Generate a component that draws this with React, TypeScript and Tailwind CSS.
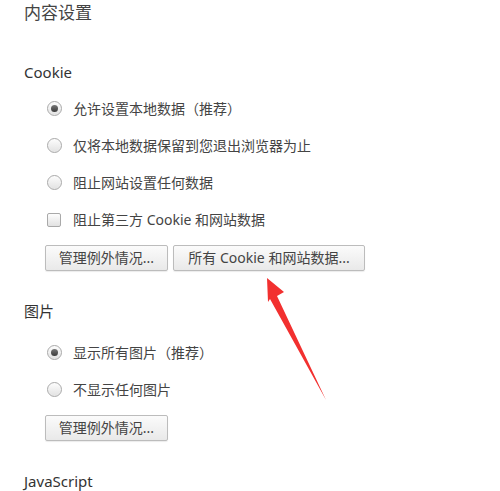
import React from 'react';

const FONT = '"Noto Sans", "Noto Sans CJK SC", sans-serif';

// Radio option row — mimics the old Chrome settings look
const Radio = ({ label, checked }: { label: string; checked?: boolean }) => (
  <div className="flex h-[37px] items-center pl-[47px]">
    <span className="flex h-[15px] w-[15px] shrink-0 items-center justify-center rounded-full border border-[#a9a9a9] bg-gradient-to-b from-[#fdfdfd] to-[#e2e2e2] shadow-[inset_0_0_1px_#fff]">
      {checked && (
        <span className="h-[7px] w-[7px] rounded-full bg-gradient-to-b from-[#777] to-[#3c3c3c]" />
      )}
    </span>
    <span className="ml-[11px] text-[14px] leading-5 text-[#444]">{label}</span>
  </div>
);

const Checkbox = ({ label }: { label: string }) => (
  <div className="flex h-[37px] items-center pl-[47px]">
    <span className="h-[14px] w-[14px] shrink-0 rounded-[2px] border border-[#a9a9a9] bg-gradient-to-b from-[#fdfdfd] to-[#e2e2e2]" />
    <span className="ml-[12px] text-[14px] leading-5 text-[#444]">{label}</span>
  </div>
);

const Button = ({ label, width }: { label: string; width: string }) => (
  <button
    className={`flex h-[26px] ${width} items-center justify-center rounded-[2px] border border-[#bcbcbc] bg-gradient-to-b from-[#fbfbfb] to-[#e9e9e9] text-[14px] leading-5 text-[#444] shadow-[0_1px_1px_rgba(0,0,0,0.08)]`}
    style={{ fontFamily: FONT }}
  >
    {label}
  </button>
);

const Heading = ({ children, className }: { children: React.ReactNode; className: string }) => (
  <div className={`pl-[24px] text-[15px] leading-5 text-[#333] ${className}`}>{children}</div>
);

export default function App() {
  return (
    <div className="relative h-[491px] w-[500px] overflow-hidden bg-white" style={{ fontFamily: FONT }}>
      <div className="pl-[24px] text-[17px] leading-[26px] text-[#444]">内容设置</div>

      <Heading className="mt-[36px]">Cookie</Heading>
      <div className="mt-[8px]">
        <Radio label="允许设置本地数据（推荐）" checked />
        <Radio label="仅将本地数据保留到您退出浏览器为止" />
        <Radio label="阻止网站设置任何数据" />
        <Checkbox label="阻止第三方 Cookie 和网站数据" />
      </div>
      <div className="mt-[7px] flex gap-[5px] pl-[45px]">
        <Button label="管理例外情况..." width="w-[123px]" />
        <Button label="所有 Cookie 和网站数据..." width="w-[192px]" />
      </div>

      <Heading className="mt-[30px]">图片</Heading>
      <div className="mt-[13px]">
        <Radio label="显示所有图片（推荐）" checked />
        <Radio label="不显示任何图片" />
      </div>
      <div className="mt-[7px] flex pl-[45px]">
        <Button label="管理例外情况..." width="w-[123px]" />
      </div>

      <Heading className="mt-[30px]">JavaScript</Heading>

      {/* Red annotation arrow drawn over the page */}
      <svg className="pointer-events-none absolute left-0 top-0" width="500" height="491" viewBox="0 0 500 491">
        <polygon points="267,278 284,292 277,296 326,400 270,299 268,302" fill="#f2302f" />
      </svg>
    </div>
  );
}
